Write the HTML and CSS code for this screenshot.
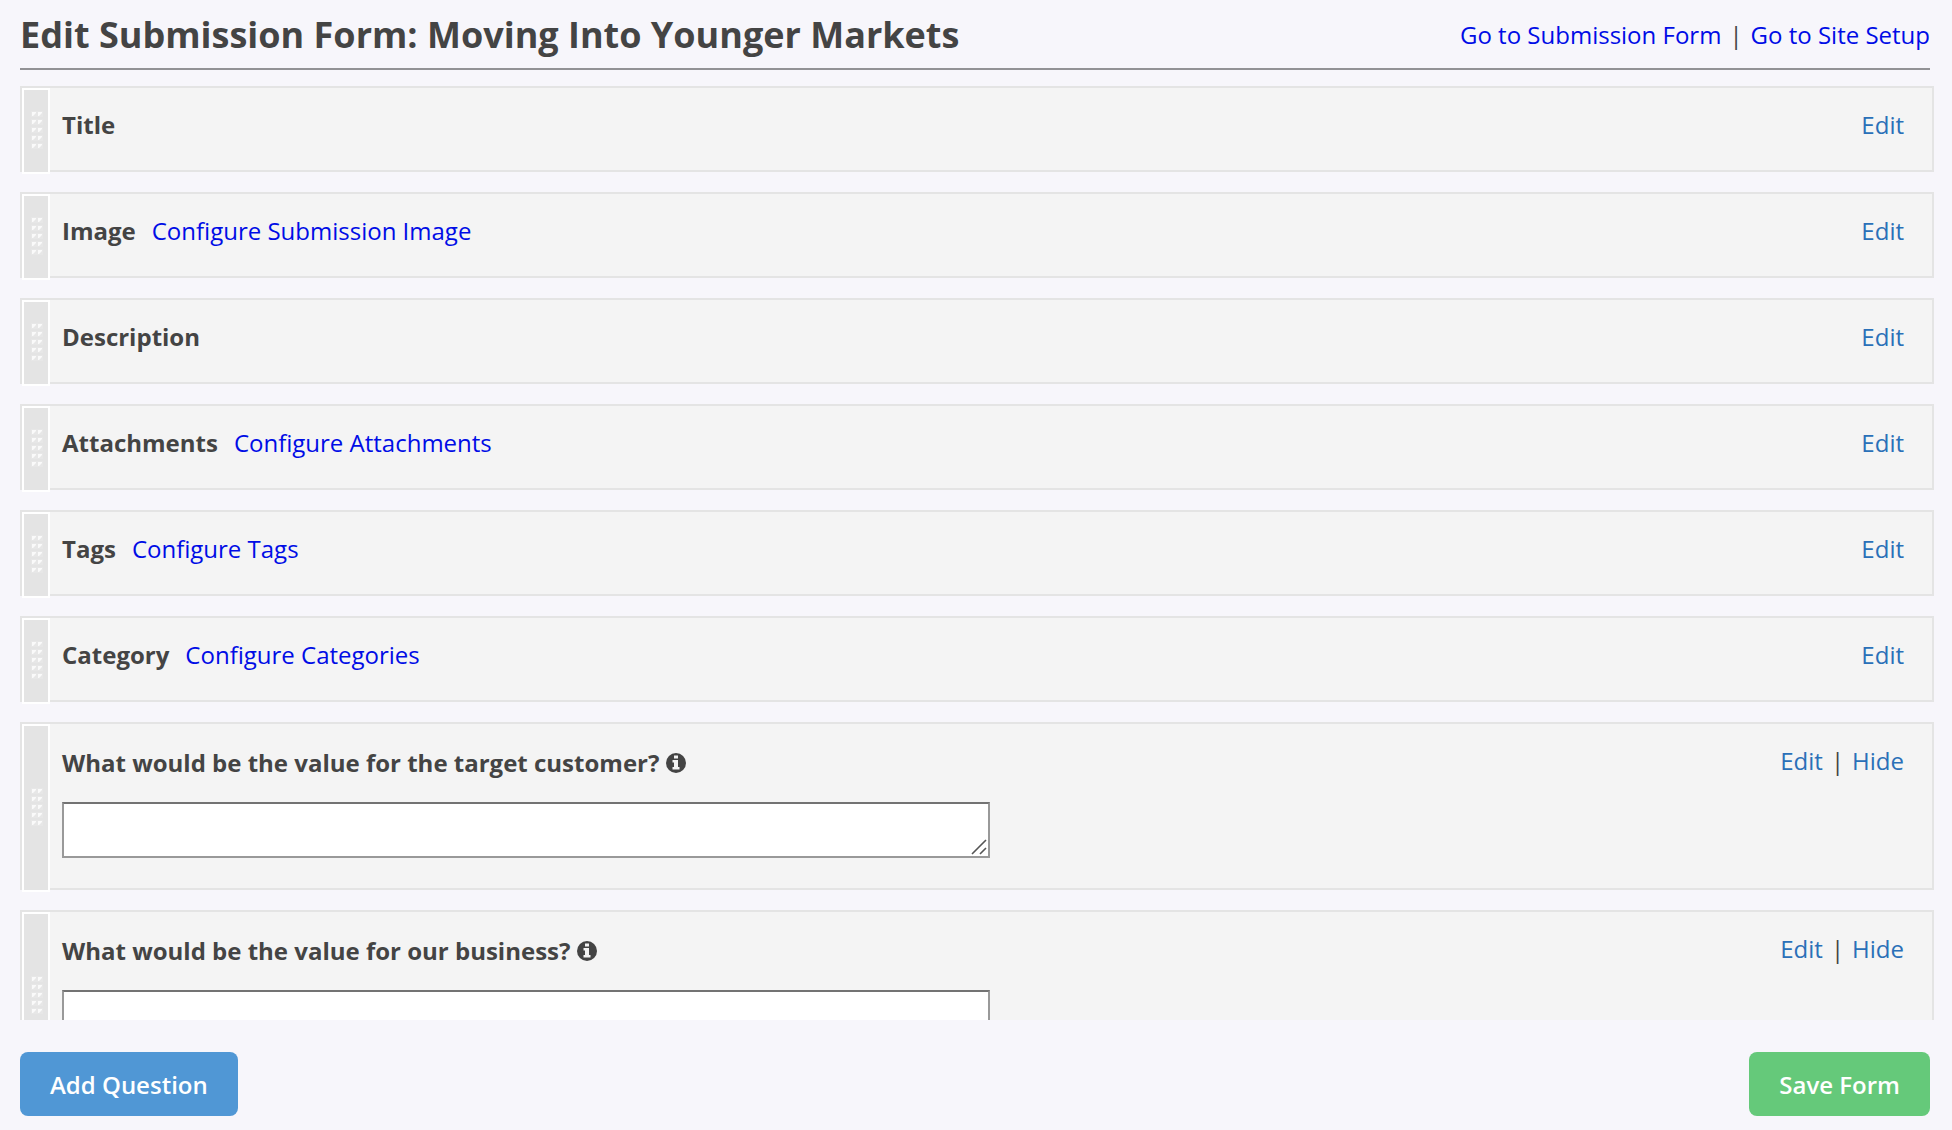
FILE: index.html
```
<!doctype html>
<html lang="en">
<head>
  <meta charset="UTF-8">
  <title>Edit Submission Form</title>
  <link rel="stylesheet" href="styles.css">
</head>
<body>
  <!-- shared icons -->
  <svg class="sprite" aria-hidden="true">
    <symbol id="grip" viewBox="0 0 12 40">
      <g id="grip-row">
        <path class="grip-shade" d="M0 0h6v6H0zM6 0h6v6H6z"/>
        <path class="grip-dot" d="M1 1h4v1L2 5H1zM7 1h4v1L8 5H7z"/>
      </g>
      <use href="#grip-row" y="8"/>
      <use href="#grip-row" y="16"/>
      <use href="#grip-row" y="24"/>
      <use href="#grip-row" y="32"/>
    </symbol>
    <symbol id="info" viewBox="0 0 20 20">
      <circle cx="10" cy="10" r="10" fill="#444"/>
      <path fill="#f4f4f4" d="M8 2.500h4v3H8zM6.500 7H12v7h1.500v2.500h-7V14H8V9.500H6.500z"/>
    </symbol>
    <symbol id="resize" viewBox="0 0 16 16">
      <path d="M1 15L15 1M9 15l6-6" fill="none" stroke="#555" stroke-width="1.600"/>
    </symbol>
  </svg>

  <div class="header">
    <h1>Edit Submission Form: Moving Into Younger Markets</h1>
    <div class="nav">
      <a href="#">Go to Submission Form</a><span class="sep">|</span><a href="#">Go to Site Setup</a>
    </div>
  </div>

  <ul class="list">
    <li>
      <div class="handle"><svg><use href="#grip"/></svg></div>
      <div class="field"><strong>Title</strong></div>
      <div class="actions"><a href="#">Edit</a></div>
    </li>
    <li>
      <div class="handle"><svg><use href="#grip"/></svg></div>
      <div class="field"><strong>Image</strong><a href="#">Configure Submission Image</a></div>
      <div class="actions"><a href="#">Edit</a></div>
    </li>
    <li>
      <div class="handle"><svg><use href="#grip"/></svg></div>
      <div class="field"><strong>Description</strong></div>
      <div class="actions"><a href="#">Edit</a></div>
    </li>
    <li>
      <div class="handle"><svg><use href="#grip"/></svg></div>
      <div class="field"><strong>Attachments</strong><a href="#">Configure Attachments</a></div>
      <div class="actions"><a href="#">Edit</a></div>
    </li>
    <li>
      <div class="handle"><svg><use href="#grip"/></svg></div>
      <div class="field"><strong>Tags</strong><a href="#">Configure Tags</a></div>
      <div class="actions"><a href="#">Edit</a></div>
    </li>
    <li>
      <div class="handle"><svg><use href="#grip"/></svg></div>
      <div class="field"><strong>Category</strong><a href="#">Configure Categories</a></div>
      <div class="actions"><a href="#">Edit</a></div>
    </li>
    <li class="question">
      <div class="handle"><svg><use href="#grip"/></svg></div>
      <div class="field">
        <label for="q1">What would be the value for the target customer?<svg class="info"><use href="#info"/></svg></label>
        <div class="answer"><textarea id="q1"></textarea><svg class="resize"><use href="#resize"/></svg></div>
      </div>
      <div class="actions"><a href="#">Edit</a><span class="sep">|</span><a href="#">Hide</a></div>
    </li>
    <li class="question">
      <div class="handle"><svg><use href="#grip"/></svg></div>
      <div class="field">
        <label for="q2">What would be the value for our business?<svg class="info"><use href="#info"/></svg></label>
        <div class="answer"><textarea id="q2"></textarea><svg class="resize"><use href="#resize"/></svg></div>
      </div>
      <div class="actions"><a href="#">Edit</a><span class="sep">|</span><a href="#">Hide</a></div>
    </li>
  </ul>

  <div class="footer">
    <button type="button" class="add">Add Question</button>
    <button type="submit" class="save">Save Form</button>
  </div>
</body>
</html>
```
FILE: styles.css
```
*{margin:0;
  padding:0;
  box-sizing:border-box;}
body{display:flex;
     flex-direction:column;
     height:100vh;
     background:#f7f6fb;
     color:#444;
     font-family:"Open Sans", "Noto Sans", sans-serif;
     font-size:24px;
     line-height:32px;}
a{color:#000ce6;
  text-decoration:none;}
a:hover{text-decoration:underline;}
.sprite{position:absolute; width:0; height:0;}
.sep{margin:0 8px;}

.header{display:flex;
        justify-content:space-between;
        align-items:center;
        height:70px;
        margin:0 22px 16px 20px;
        padding-top:2px;
        border-bottom:2px solid #929295;}
.header h1{font-size:36px; line-height:48px;}

.list{flex:1;
      min-height:0;
      padding:0 18px 0 20px;
      overflow-y:auto;
      scrollbar-width:none;
      list-style:none;}
.list li{display:flex;
         min-height:86px;
         margin-bottom:20px;
         border:2px solid #e4e4e4;
         background:#f4f4f4;}
.handle{display:flex;
        flex:none;
        align-items:center;
        justify-content:center;
        width:28px;
        margin-bottom:-4px;
        padding-left:2px;
        border:2px solid #fff;
        background:#e4e4e4;}
.handle svg{width:12px; height:40px;}
.grip-shade{fill:#e7e7e7;}
.grip-dot{fill:#fafafa;}

.field{flex:1; padding:21px 0 0 12px;}
.field a{margin-left:16px;}
.actions{padding:21px 28px 0 0;}
.actions a{color:#2a70b8;}

.question{height:168px;}
.question .field{padding-top:23px;}
label{display:flex;
      align-items:center;
      font-weight:bold;}
.info{width:20px; height:20px; margin-left:7px;}
.answer{position:relative;
        width:54%;
        margin-top:23px;}
.answer textarea{display:block;
                 width:100%;
                 height:56px;
                 padding:4px;
                 border:2px solid #999;
                 border-top-color:#737373;
                 background:#fff;
                 font:inherit;
                 resize:none;}
.resize{position:absolute;
        right:3px;
        bottom:3px;
        width:16px;
        height:16px;
        pointer-events:none;}

.footer{display:flex;
        justify-content:space-between;
        padding:32px 22px 14px 20px;}
.footer button{height:64px;
               padding:2px 30px 0;
               border:0;
               border-radius:8px;
               color:#fff;
               font:600 24px/32px "Open Sans", "Noto Sans", sans-serif;
               cursor:pointer;}
.footer .add{background:#5097d5;}
.footer .save{background:#65c97a;}
```
